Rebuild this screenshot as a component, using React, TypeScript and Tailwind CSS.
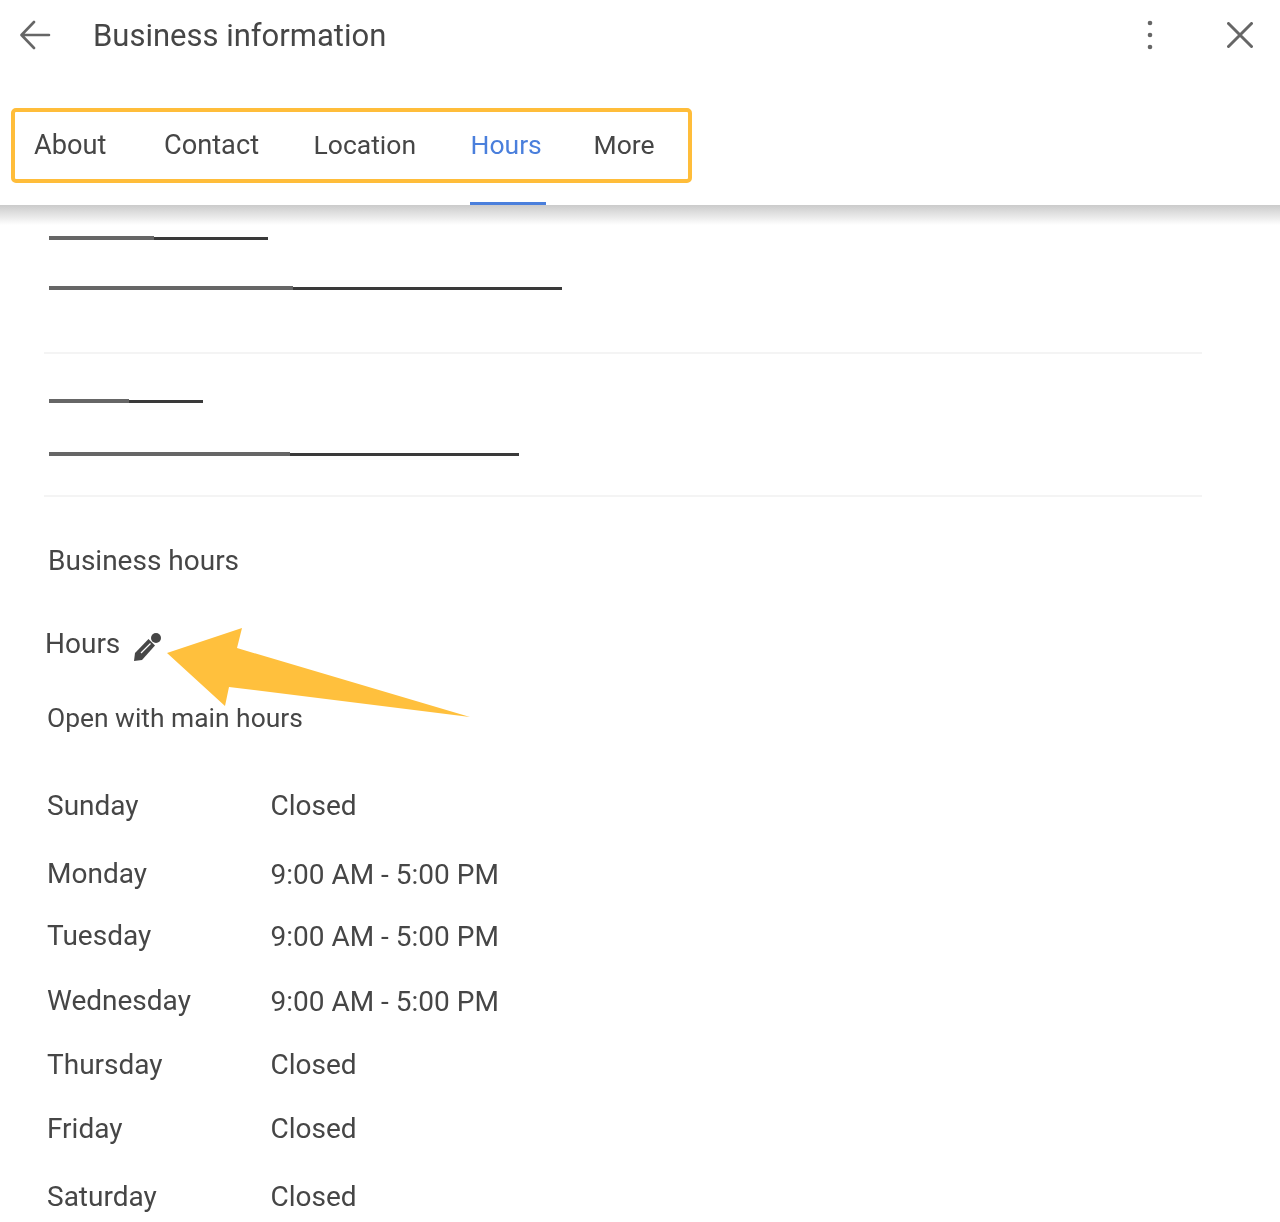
const tabs = [
  { label: 'About', cls: 'ml-[19px] w-[130px] text-[27.2px]' },
  { label: 'Contact', cls: 'w-[149.5px] text-[27.2px]' },
  { label: 'Location', cls: 'w-[157px] text-[26.5px]' },
  { label: 'Hours', cls: 'w-[123px] text-[26.5px]', active: true },
  { label: 'More', cls: 'w-[80px] text-[26.5px]' },
];

const hours = [
  { day: 'Sunday', time: 'Closed', cls: 'h-[68px]' },
  { day: 'Monday', time: '9:00 AM - 5:00 PM', cls: 'h-[62px]' },
  { day: 'Tuesday', time: '9:00 AM - 5:00 PM', cls: 'h-[65px]' },
  { day: 'Wednesday', time: '9:00 AM - 5:00 PM', cls: 'h-[64px]' },
  { day: 'Thursday', time: 'Closed', cls: 'h-[64px]' },
  { day: 'Friday', time: 'Closed', cls: 'h-[68px]' },
  { day: 'Saturday', time: 'Closed', cls: 'h-[40px]' },
];

// redacted text: a soft grey stroke that turns into a thinner dark one
const Redacted = ({ left, right, cls }: { left: string; right: string; cls: string }) => (
  <div className={`ml-[49px] flex items-center h-[4px] ${cls}`}>
    <div className={`h-[4px] bg-[#666666] ${left}`} />
    <div className={`h-[3px] bg-[#3a3a3a] ${right}`} />
  </div>
);

const App = () => {
  return (
    <div className="relative h-[1222px] w-[1280px] overflow-hidden bg-white text-[#464646] font-['Roboto',sans-serif]">
      <header className="h-[205px] flex flex-col">
        <div className="h-[70px] flex items-center">
          <svg className="ml-[19px] w-[32px] h-[32px] blur-[0.4px]" viewBox="0 0 32 32" fill="none" stroke="#666" strokeWidth="2.6" strokeLinecap="round" strokeLinejoin="round">
            <path d="M30 16H3M15 3 2.5 16 15 29" />
          </svg>
          <h1 className="ml-[42px] text-[31px] leading-none font-normal blur-[0.5px]">Business information</h1>
          <svg className="ml-auto w-[6px] h-[30px] blur-[0.4px]" viewBox="0 0 6 30" fill="#666">
            <circle cx="3" cy="3" r="2.3" />
            <circle cx="3" cy="15" r="2.3" />
            <circle cx="3" cy="27" r="2.3" />
          </svg>
          <svg className="ml-[74px] mr-[27px] w-[26px] h-[26px] blur-[0.4px]" viewBox="0 0 26 26" fill="none" stroke="#666" strokeWidth="3" strokeLinecap="round">
            <path d="M1.5 1.5 24.5 24.5M24.5 1.5 1.5 24.5" />
          </svg>
        </div>
        <nav className="mt-[38px] ml-[11px] w-[681px] h-[75px] border-4 border-[#ffbd3a] rounded-[5px] flex items-center">
          {tabs.map((t) => (
            <div key={t.label} className={`relative ${t.cls} leading-none ${t.active ? 'text-[#4a7fdc]' : ''}`}>
              <span className="blur-[0.5px] inline-block">{t.label}</span>
              {t.active && <div className="absolute left-[-1px] top-[70px] w-[76px] h-[3px] bg-[#4a7fdc]" />}
            </div>
          ))}
        </nav>
      </header>
      <div className="h-[20px] bg-gradient-to-b from-[#cbcbcb] to-white" />

      <main className="blur-[0.5px]">
        <Redacted left="w-[105px]" right="w-[114px]" cls="mt-[11px]" />
        <Redacted left="w-[244px]" right="w-[269px]" cls="mt-[46px]" />
        <div className="mt-[62px] ml-[44px] mr-[78px] h-[2px] bg-[#f4f4f4]" />
        <Redacted left="w-[80px]" right="w-[74px]" cls="mt-[45px]" />
        <Redacted left="w-[241px]" right="w-[229px]" cls="mt-[49px]" />
        <div className="mt-[39px] ml-[44px] mr-[78px] h-[2px] bg-[#f4f4f4]" />

        <h2 className="mt-[47px] ml-[48px] text-[28px] leading-[34px] font-normal">Business hours</h2>
        <div className="mt-[49px] ml-[45px] h-[34px] flex items-center text-[28px]">
          <span>Hours</span>
          <svg className="ml-[12px] mt-[6px] w-[32px] h-[32px]" viewBox="0 0 32 32">
            <path d="M2 30 3 22 16.5 8 23 14.5 10 29Z" fill="#464646" />
            <circle cx="24" cy="7" r="5" fill="#464646" />
            <path d="M9 22 18.5 12.5" stroke="#fff" strokeWidth="1.2" fill="none" />
          </svg>
        </div>
        <p className="mt-[40px] ml-[47px] text-[26.4px] leading-[34px]">Open with main hours</p>

        <div className="mt-[54px] ml-[47px] text-[28px] leading-[34px]">
          {hours.map((h) => (
            <div key={h.day} className={`flex ${h.cls}`}>
              <span className="w-[223.5px]">{h.day}</span>
              <span className={h.time === 'Closed' ? '' : 'pt-[1px]'}>{h.time}</span>
            </div>
          ))}
        </div>
      </main>

      <svg className="absolute left-0 top-0 w-[1280px] h-[1222px] pointer-events-none" viewBox="0 0 1280 1222">
        <polygon points="167,653 242,628 237,648 470,717 229,687 225,706" fill="#ffc03d" />
      </svg>
    </div>
  );
};

export default App;
